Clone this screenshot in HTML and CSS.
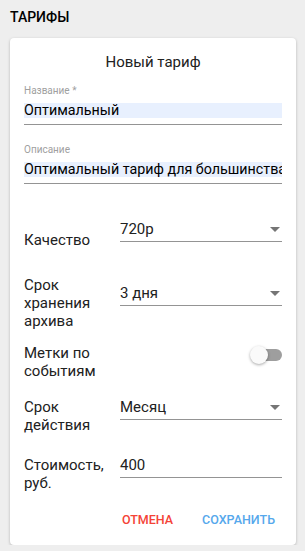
FILE: index.html
```html
<!DOCTYPE html>
<html lang="ru">
<head>
  <meta charset="UTF-8" />
  <meta name="viewport" content="width=device-width, initial-scale=1.0"/>
  <title>Тарифы</title>
  <link rel="stylesheet" href="styles.css">
</head>
<body>
  <h1 class="page-title">ТАРИФЫ</h1>
  <div class="card">
    <h2 class="card-title">Новый тариф</h2>

    <div class="text-field">
      <label class="field-label">Название *</label>
      <div class="field-input"><span class="autofill">Оптимальный</span></div>
    </div>

    <div class="text-field desc">
      <label class="field-label">Описание</label>
      <div class="field-input"><span class="autofill">Оптимальный тариф для большинства пользователей</span></div>
    </div>

    <div class="row row-quality">
      <div class="row-label">Качество</div>
      <div class="select">
        <span>720p</span>
        <svg class="arrow" width="10" height="5" viewBox="0 0 10 5"><path d="M0 0L5 5L10 0Z" fill="#757575"/></svg>
      </div>
    </div>

    <div class="row row-archive">
      <div class="row-label">Срок хранения архива</div>
      <div class="select">
        <span>3 дня</span>
        <svg class="arrow" width="10" height="5" viewBox="0 0 10 5"><path d="M0 0L5 5L10 0Z" fill="#757575"/></svg>
      </div>
    </div>

    <div class="row row-marks">
      <div class="row-label">Метки по событиям</div>
      <div class="switch">
        <div class="track"></div>
        <div class="thumb"></div>
      </div>
    </div>

    <div class="row row-period">
      <div class="row-label">Срок действия</div>
      <div class="select">
        <span>Месяц</span>
        <svg class="arrow" width="10" height="5" viewBox="0 0 10 5"><path d="M0 0L5 5L10 0Z" fill="#757575"/></svg>
      </div>
    </div>

    <div class="row row-price">
      <div class="row-label">Стоимость, руб.</div>
      <div class="select"><span>400</span></div>
    </div>

    <div class="actions">
      <button class="btn btn-cancel">Отмена</button>
      <button class="btn btn-save">Сохранить</button>
    </div>
  </div>
</body>
</html>
```

FILE: styles.css
```css
body {
  margin: 0;
  background: #eeeeee;
  font-family: Roboto, "Noto Sans", sans-serif;
  color: #212121;
}

.page-title {
  margin: 0;
  padding: 8px 10px 0;
  height: 30px;
  font-size: 14px;
  font-weight: 500;
  line-height: 18px;
  color: #000;
}

.card {
  margin: 0 9px 0 10px;
  background: #fff;
  border-radius: 4px;
  box-shadow: 0 1px 3px rgba(0, 0, 0, 0.25);
  padding: 14px 14px 12px;
}

.card-title {
  margin: 0 0 13px;
  text-align: center;
  font-size: 15px;
  font-weight: 400;
  line-height: 20px;
  color: #212121;
}

.text-field {
  display: flex;
  flex-direction: column;
}

.text-field.desc {
  margin-top: 19px;
}

.field-label {
  font-size: 10px;
  line-height: 12px;
  color: #a0a0a0;
  margin-bottom: 6px;
}

.field-input {
  border-bottom: 1px solid #949494;
  padding-bottom: 6px;
  overflow: hidden;
  white-space: nowrap;
  font-size: 14.3px;
  line-height: 15px;
}

.autofill {
  display: block;
  background: #e8f0fe;
  color: #000;
  overflow: hidden;
}

.row {
  display: flex;
  align-items: flex-start;
}

.row-label {
  width: 96px;
  flex: none;
  font-size: 15px;
  line-height: 18px;
  color: #212121;
}

.select {
  flex: 1;
  display: flex;
  align-items: center;
  justify-content: space-between;
  border-bottom: 1px solid #949494;
  font-size: 15px;
  line-height: 18px;
  padding-bottom: 3px;
  color: #212121;
}

.arrow {
  margin-right: 2px;
}

.row-quality {
  margin-top: 36px;
}

.row-quality .row-label {
  margin-top: 11px;
}

.row-archive {
  margin-top: 27px;
}

.row-archive .select {
  margin-top: 8px;
}

.row-marks {
  margin-top: 14px;
  justify-content: space-between;
}

.switch {
  position: relative;
  width: 32px;
  height: 20px;
  margin-top: 1px;
}

.track {
  position: absolute;
  left: 3px;
  top: 4px;
  width: 29px;
  height: 12px;
  border-radius: 6px;
  background: #9e9e9e;
}

.thumb {
  position: absolute;
  left: 0;
  top: 1px;
  width: 18px;
  height: 18px;
  border-radius: 50%;
  background: #fafafa;
  box-shadow: 0 1px 3px rgba(0, 0, 0, 0.35);
}

.row-period {
  margin-top: 18px;
}

.row-price {
  margin-top: 22px;
}

.actions {
  display: flex;
  justify-content: flex-end;
  gap: 13px;
  margin-top: 14px;
}

.btn {
  background: none;
  border: none;
  padding: 6px 8px;
  font-family: Roboto, "Noto Sans", sans-serif;
  font-size: 12.5px;
  line-height: 15px;
  font-weight: 500;
  text-transform: uppercase;
  cursor: pointer;
}

.btn-cancel {
  color: #f44336;
}

.btn-save {
  color: #56a8ec;
  padding-right: 7px;
}
```
